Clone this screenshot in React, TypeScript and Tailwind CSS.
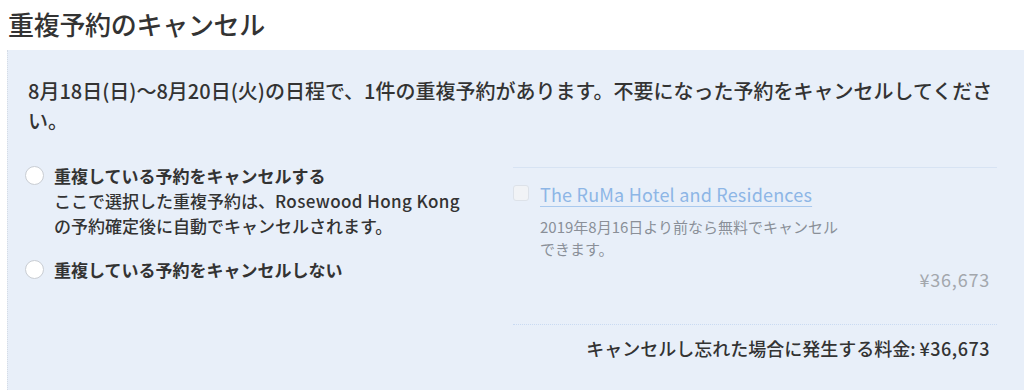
const FONT = "font-['Noto_Sans_CJK_JP','Noto_Sans',sans-serif]";

function Radio() {
  return (
    <span className="mt-[3px] h-[19px] w-[19px] shrink-0 rounded-full border border-[#c9cdd3] bg-white" />
  );
}

export default function App() {
  return (
    <div className={`${FONT} flex h-[390px] w-[1024px] flex-col overflow-hidden bg-white text-[#333]`}>
      <h1 className="pl-[8px] pt-[6px] text-[26px] leading-[36px] font-medium tracking-[-0.3px] text-[#333]">
        重複予約のキャンセル
      </h1>

      <div className="mt-[8px] ml-[7px] flex-1 border-l border-dotted border-[#d5dce6] bg-[#e8eff9] pl-[20px] pr-[21px] pt-[26px]">
        <p className="text-[20px] leading-[30px] font-medium">
          8月18日(日)〜8月20日(火)の日程で、1件の重複予約があります。不要になった予約をキャンセルしてください。
        </p>

        <div className="mt-[27px] flex">
          <div className="flex w-[485px] flex-col gap-[19px]">
            <label className="-ml-[3px] flex gap-[10px]">
              <Radio />
              <div className="text-[17px] leading-[25px]">
                <div className="font-bold">重複している予約をキャンセルする</div>
                <div className="font-medium">
                  ここで選択した重複予約は、<span className="tracking-[0.4px]">Rosewood Hong Kong</span>
                  <br />
                  の予約確定後に自動でキャンセルされます。
                </div>
              </div>
            </label>
            <label className="-ml-[3px] flex gap-[10px]">
              <Radio />
              <div className="text-[17px] leading-[25px] font-bold">
                重複している予約をキャンセルしない
              </div>
            </label>
          </div>

          <div className="mt-[4px] w-[484px]">
            <div className="border-t border-[#d7e3f3] pt-[13px] pr-[7px]">
              <div className="flex gap-[11px]">
                <span className="mt-[4px] h-[16px] w-[16px] shrink-0 rounded-[3px] border border-[#dde2e9] bg-[#f1f3f6]" />
                <div>
                  <a className="text-[18px] leading-[26px] tracking-[0.2px] text-[#8db6e6] underline decoration-[#a9c9ee] underline-offset-[4px]">
                    The RuMa Hotel and Residences
                  </a>
                  <div className="mt-[9px] text-[15px] leading-[22px] text-[#8a8f98]">
                    2019年8月16日より前なら無料でキャンセル
                    <br />
                    できます。
                  </div>
                </div>
              </div>
              <div className="mt-[8px] text-right text-[18px] leading-[22px] tracking-[0.8px] text-[#a3a7ad]">
                ¥36,673
              </div>
            </div>
            <div className="mt-[34px] border-t border-dotted border-[#c9daf2] pt-[12px] pr-[7px] text-right text-[18px] leading-[22px] font-medium">
              キャンセルし忘れた場合に発生する料金: <span className="tracking-[0.5px]">¥36,673</span>
            </div>
          </div>
        </div>
      </div>
    </div>
  );
}
